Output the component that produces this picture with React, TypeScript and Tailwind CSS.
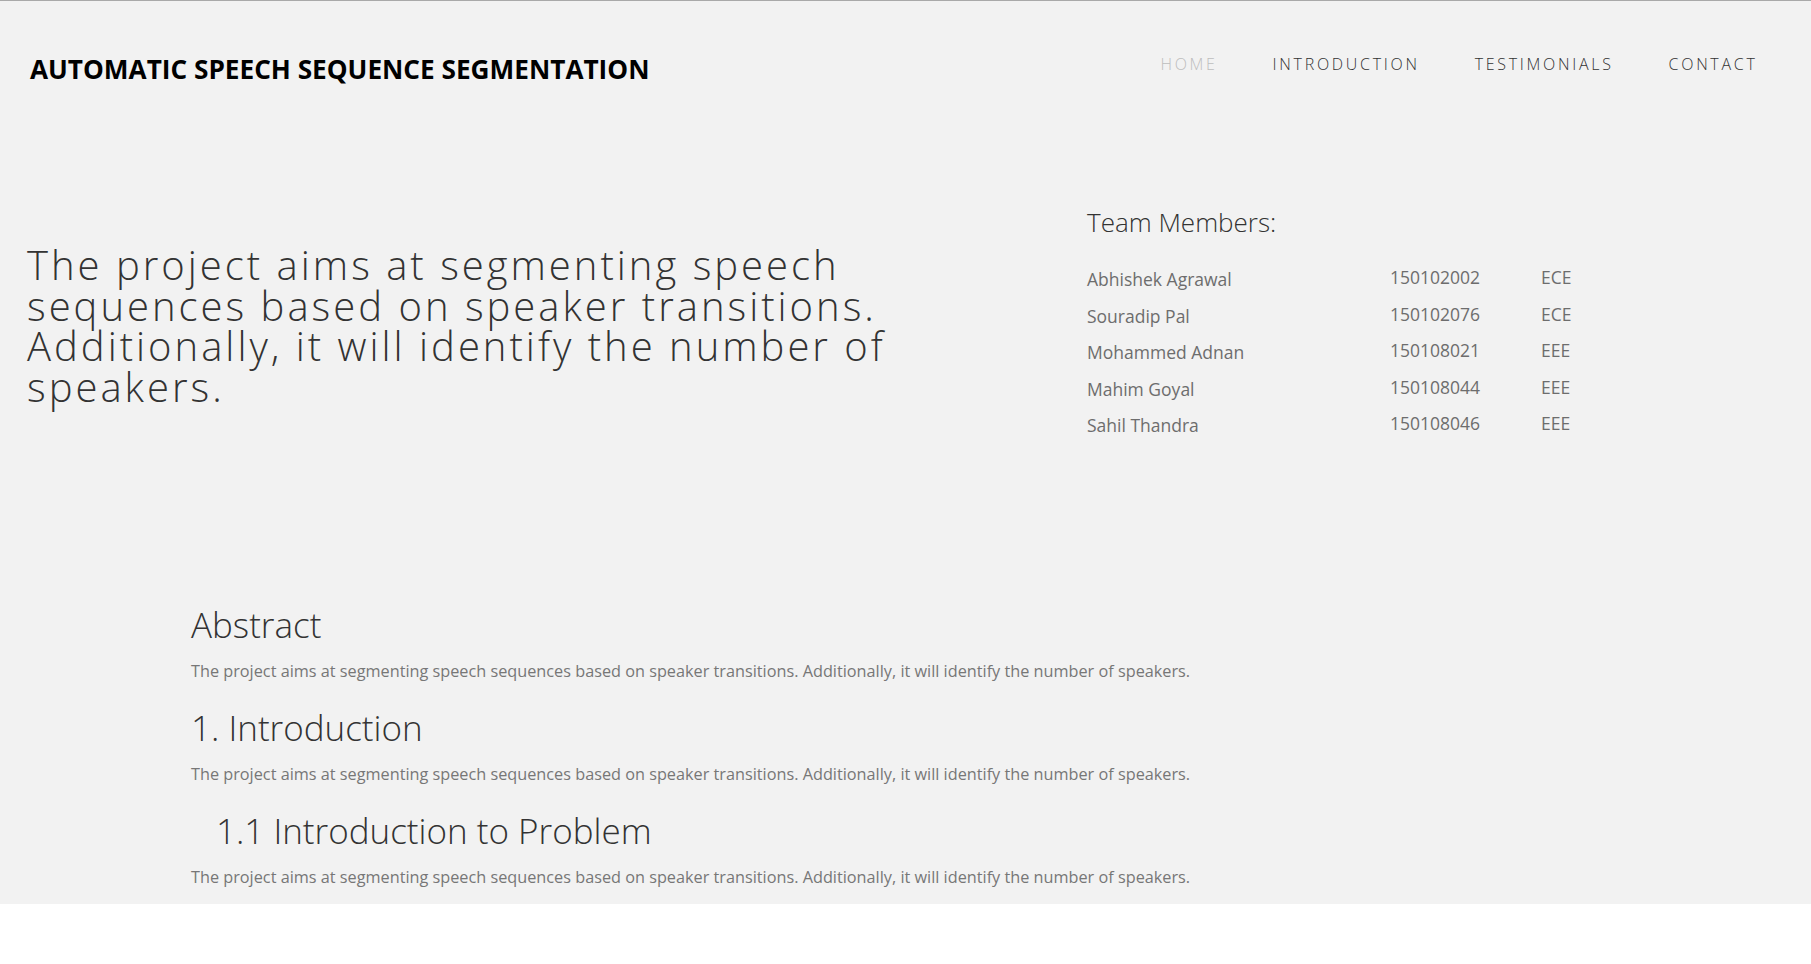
const navItems = [
  { label: "Home", active: true },
  { label: "Introduction" },
  { label: "Testimonials" },
  { label: "Contact" },
];

const team = [
  { name: "Abhishek Agrawal", roll: "150102002", dept: "ECE" },
  { name: "Souradip Pal", roll: "150102076", dept: "ECE" },
  { name: "Mohammed Adnan", roll: "150108021", dept: "EEE" },
  { name: "Mahim Goyal", roll: "150108044", dept: "EEE" },
  { name: "Sahil Thandra", roll: "150108046", dept: "EEE" },
];

const summary =
  "The project aims at segmenting speech sequences based on speaker transitions. Additionally, it will identify the number of speakers.";

const sections = [
  { title: "Abstract", indent: false },
  { title: "1. Introduction", indent: false },
  { title: "1.1 Introduction to Problem", indent: true },
];

export default function App() {
  return (
    <div className="min-h-screen bg-white font-['Open_Sans',sans-serif]">
      <div className="border-t border-[#a9a9a9] bg-[#f2f2f2] pb-[15px]">
        <header className="flex items-start justify-between pl-[30px] pr-[26px] pt-[51px]">
          <h1 className="mt-[2px] text-[26.2px] font-bold leading-[30px] text-black">
            AUTOMATIC SPEECH SEQUENCE SEGMENTATION
          </h1>
          <nav className="flex items-center">
            {navItems.map((item) => (
              <a
                key={item.label}
                href="#"
                className={
                  item.active
                    ? "px-[27.5px] text-[16px] font-light uppercase leading-[24px] tracking-[2.7px] text-[#bdbdbd]"
                    : "px-[27.5px] text-[16px] font-light uppercase leading-[24px] tracking-[2.7px] text-[#333]"
                }
              >
                {item.label}
              </a>
            ))}
          </nav>
        </header>

        <section className="mt-[121px] flex items-start pl-[27px]">
          <p className="w-[1060px] shrink-0 pr-[120px] pt-[40px] text-[40px] font-light leading-[40.5px] tracking-[3px] text-[#333]">
            {summary}
          </p>
          <div>
            <h2 className="text-[26px] font-light leading-[34px] text-[#333]">Team Members:</h2>
            <div className="mt-[22px] grid grid-cols-[303px_151px_auto] items-start text-[17.5px] text-[#6d6d6d]">
              {team.map((m) => (
                <div key={m.roll} className="contents">
                  <span className="leading-[36.5px]">{m.name}</span>
                  <span className="leading-[32px]">{m.roll}</span>
                  <span className="leading-[32px]">{m.dept}</span>
                </div>
              ))}
            </div>
          </div>
        </section>

        <main className="mt-[159px] pl-[191px]">
          {sections.map((s, i) => (
            <div key={s.title} className={i > 0 ? "mt-[23px]" : ""}>
              <h3
                className={
                  s.indent
                    ? "pl-[25px] text-[35px] font-light leading-[44px] text-[#333]"
                    : "text-[35px] font-light leading-[44px] text-[#333]"
                }
              >
                {s.title}
              </h3>
              <p className="mt-[12px] text-[16.25px] leading-[24px] text-[#777]">{summary}</p>
            </div>
          ))}
        </main>
      </div>
    </div>
  );
}
